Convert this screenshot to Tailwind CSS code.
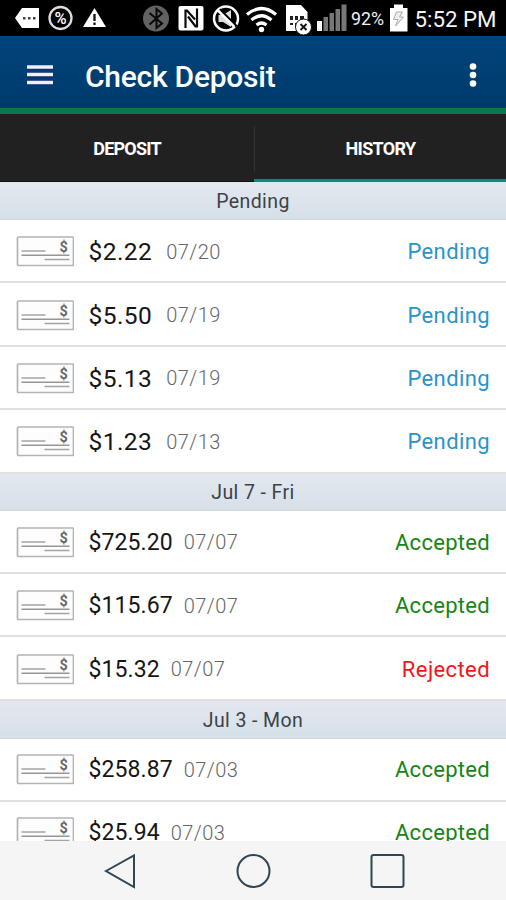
<!DOCTYPE html>
<html lang="en">
<head>
<meta charset="utf-8">
<title>Check Deposit</title>
<script src="https://cdn.jsdelivr.net/npm/@tailwindcss/browser@4"></script>
</head>
<body class="w-[506px] h-[900px] overflow-hidden bg-white font-['Roboto',sans-serif] flex flex-col">
<svg class="hidden">
  <symbol id="check" viewBox="0 0 58 31">
    <rect x="1.500" y="1" width="56" height="28.500" rx="1" fill="#fdfdfd" stroke="#b4b4b4" stroke-width="1.700"/>
    <path d="M5.500 15H29.500M28.500 23.500H53.500" stroke="#a4a4a4" stroke-width="1.500"/>
    <path d="M5.500 19.200H53.500" stroke="#969696" stroke-width="1.500"/>
    <text x="43.500" y="16" font-size="14.500" font-weight="700" fill="#686868" font-family="Roboto">$</text>
  </symbol>
</svg>

<div class="h-9 shrink-0 bg-black">
  <svg width="506" height="36" viewBox="0 0 506 36" font-family="Roboto">
    <path d="M15 18L22 8H39V28H22Z" fill="#fff"/>
    <path d="M23 17h2.500v2.500h-2.500zM28 17h2.500v2.500h-2.500zM33 17h2.500v2.500h-2.500z" fill="#444"/>
    <circle cx="60.500" cy="18" r="11" fill="none" stroke="#ddd" stroke-width="2.300"/>
    <text x="60.500" y="23.500" font-size="16.500" font-weight="500" text-anchor="middle" fill="#fff">%</text>
    <path d="M94.500 8L106 27H83Z" fill="#fff"/>
    <path d="M94.500 14V21M94.500 22.500V25" stroke="#111" stroke-width="2.300"/>
    <circle cx="156" cy="18.500" r="13" fill="#626262"/>
    <path d="M149.500 13L162 23.500L156.500 28V9L162 13.500L149.500 24.500" fill="none" stroke="#090909" stroke-width="2"/>
    <rect x="178.500" y="6" width="25" height="24.500" rx="2" fill="#fff"/>
    <path d="M185.500 28V10.500H187L195 19.500M188 16.500L195.500 26.500H197V8.500" fill="none" stroke="#0c0c0c" stroke-width="2.200"/>
    <circle cx="226" cy="18.500" r="12" fill="none" stroke="#fff" stroke-width="2.500"/>
    <path d="M218.500 15H223L231 10V27L223 22H218.500Z" fill="#ddd"/>
    <path d="M219.500 9.500L236.500 26.500" stroke="#000" stroke-width="3"/>
    <path d="M217.500 10L234.500 27" stroke="#fff" stroke-width="2.500"/>
    <path d="M247 14.500Q261.500 2.500 276 14.500M251.500 20Q261.500 11.500 271.500 20M256.500 25Q261.500 21 266.500 25" fill="none" stroke="#fff" stroke-width="3.200"/>
    <circle cx="261.500" cy="29.500" r="2.700" fill="#fff"/>
    <path d="M286 5H301L307.500 12V31H286Z" fill="#fff"/>
    <path d="M290 16h3v4h-3zM295 16h3v4h-3zM300 16h4v4h-4zM290 23h3v2h-3zM295 23h2v4h-2z" fill="#222"/>
    <circle cx="303.500" cy="27" r="8" fill="#fff" stroke="#111" stroke-width="1"/>
    <path d="M300.500 24L306.500 30M306.500 24L300.500 30" stroke="#111" stroke-width="1.800"/>
    <path d="M317 21h5v10h-5z" fill="#fff"/>
    <path d="M323.500 17h4.500v14h-4.500zM329.500 13h4.500v18h-4.500zM335.500 9h4.500v22h-4.500zM341.500 4.500h5v26.500h-5z" fill="#777"/>
    <text x="351" y="25" font-size="18" textLength="33" lengthAdjust="spacingAndGlyphs" fill="#f2f2f2">92%</text>
    <path d="M390 8h4V4.500h9V8h4.500v23.500H390z" fill="#fff"/>
    <path d="M396.500 12L393.500 19.500H398L395.500 26L403.500 17H399.500L402.500 12Z" fill="#eee" stroke="#aaa" stroke-width="1"/>
    <text x="414.500" y="26.500" font-size="22.500" textLength="82" lengthAdjust="spacingAndGlyphs" fill="#f5f5f5">5:52 PM</text>
  </svg>
</div>

<header class="h-[78px] shrink-0 flex items-center pl-[27px] pr-[29px] bg-linear-to-b from-[#00447c] to-[#003a6b] border-b-6 border-[#057a50]">
  <svg width="26" height="20" viewBox="0 0 26 20" class="mt-1.5"><path d="M0 2H26M0 10H26M0 18H26" stroke="#17156b" stroke-width="4.800" opacity=".6"/><path d="M0 2H26M0 9.500H26M0 17.500H26" stroke="#f1effb" stroke-width="3.500"/></svg>
  <h1 class="ml-8 mt-2.5 text-[30px] leading-9 font-medium tracking-[-0.25px] text-white whitespace-nowrap">Check Deposit</h1>
  <svg class="ml-auto mt-1.5" width="8" height="24" viewBox="0 0 8 24" fill="#fff"><circle cx="4" cy="3.500" r="3.300"/><circle cx="4" cy="12" r="3.300"/><circle cx="4" cy="20.500" r="3.300"/></svg>
</header>

<nav class="h-[68px] shrink-0 flex bg-[#212121] text-[18px] font-bold text-white">
  <div class="w-[254px] flex items-center justify-center border-b-1 border-[#111] pt-0.5"><span class="tracking-[-0.8px]">DEPOSIT</span></div>
  <div class="flex-1 flex items-center border-b-3 border-[#0c8b78]"><div class="w-px h-[46px] bg-[#333] mt-1"></div><span class="flex-1 text-center tracking-[-0.65px] pt-1">HISTORY</span></div>
</nav>

<main id="list" class="flex-1 min-h-0 overflow-hidden"></main>

<footer class="h-[59px] shrink-0 bg-[#f5f5f5]">
  <svg width="506" height="59" viewBox="0 0 506 59" fill="none" stroke="#2f4654" stroke-width="2">
    <path d="M106 30L134 14.500V46Z"/><circle cx="253.500" cy="30" r="16"/><rect x="371.500" y="14" width="32" height="32" rx="2"/>
  </svg>
</footer>

<script>
const data = [
  ["Pending", "h-[38px]", "h-[63.4px] pt-[2px]", [["$2.22","07/20","Pending"],["$5.50","07/19","Pending"],["$5.13","07/19","Pending"],["$1.23","07/13","Pending"]]],
  ["Jul 7 - Fri", "h-[37px]", "h-[63.4px] pt-[2px]", [["$725.20","07/07","Accepted"],["$115.67","07/07","Accepted"],["$15.32","07/07","Rejected"]]],
  ["Jul 3 - Mon", "h-[38px]", "h-[63px] pt-[1px]", [["$258.87","07/03","Accepted"],["$25.94","07/03","Accepted"]]]
];
const tone = {Pending:"text-[#2a93c8] tracking-[0.4px]", Accepted:"text-[#168516] tracking-[0.3px]", Rejected:"text-[#f01818] tracking-[0.4px]"};
document.getElementById("list").innerHTML = data.map(([name, h, row, rows]) => `
  <h2 class="${h} flex items-center justify-center pt-[3px] text-[19.5px] tracking-[0.4px] text-[#3c4248] bg-linear-to-b from-[#e3e8ef] to-[#d6e0e8] border-b border-[#d0d6dc]">${name}</h2>` +
  rows.map(([amt, date, st]) => `
  <div class="${row} flex items-center pl-4 pr-[16px] border-b-2 border-[#e0e0e0]">
    <svg class="w-[58px] h-[31px] shrink-0"><use href="#check"/></svg>
    <span class="${amt.length > 5 ? "text-[23px] tracking-[0.1px] mr-[11px]" : "text-[24.5px] tracking-[0.45px] mr-[14px]"} ml-[14.5px] pt-[2px] text-[#161616]">${amt}</span>
    <span class="text-[20px] tracking-[0.4px] font-light text-[#666]">${date}</span>
    <span class="ml-auto text-[22px] ${tone[st]}">${st}</span>
  </div>`).join("")).join("");
</script>
</body>
</html>
